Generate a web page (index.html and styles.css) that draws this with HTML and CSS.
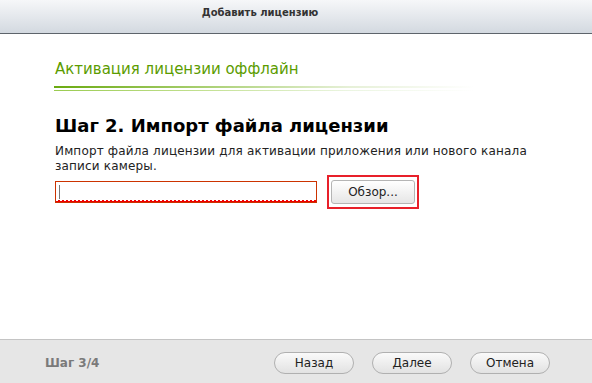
FILE: index.html
```html
<!DOCTYPE html>
<html lang="ru">
<head>
    <meta charset="UTF-8">
    <title>Добавить лицензию</title>
    <link rel="stylesheet" href="styles.css">
</head>
<body>
    <div class="dialog">
        <div class="dialog-header">Добавить лицензию</div>

        <div class="dialog-body">
            <div class="section-title">Активация лицензии оффлайн</div>
            <div class="section-rule"></div>

            <h2 class="step-title">Шаг 2. Импорт файла лицензии</h2>
            <p class="step-desc">Импорт файла лицензии для активации приложения или нового канала записи камеры.</p>

            <div class="file-row">
                <div class="file-input"><span class="caret"></span></div>
                <div class="browse-wrap">
                    <button class="button browse">Обзор...</button>
                </div>
            </div>
        </div>

        <div class="dialog-footer">
            <span class="step-count">Шаг 3/4</span>
            <div class="footer-buttons">
                <button class="button pill">Назад</button>
                <button class="button pill">Далее</button>
                <button class="button pill">Отмена</button>
            </div>
        </div>
    </div>
</body>
</html>
```

FILE: styles.css
```css
body {
    margin: 0;
    width: 592px;
    height: 383px;
    font-family: "DejaVu Sans", Verdana, sans-serif;
    background-color: #ffffff;
    overflow: hidden;
}

.dialog {
    display: flex;
    flex-direction: column;
    height: 100%;
}

.dialog-header {
    height: 33px;
    line-height: 26px;
    padding-right: 72px;
    text-align: center;
    font-size: 10px;
    font-weight: bold;
    color: #333;
    background: linear-gradient(#f6f7f9, #d3d9e0);
    border-bottom: 1px solid #5d646b;
}

.dialog-body {
    flex: 1;
    padding: 26px 0 0 55px;
}

.section-title {
    font-size: 15px;
    color: #5b9c00;
    line-height: 18px;
}

.section-rule {
    margin: 8px 0 0 -1px;
    width: 420px;
    height: 5px;
    background:
        linear-gradient(to right, #6aaa10, #a8cf70 35%, rgba(230, 240, 215, 1) 70%, rgba(255, 255, 255, 0)) top / 100% 2px no-repeat,
        linear-gradient(to right, #9acb50, #c2e090 35%, rgba(235, 245, 225, 1) 70%, rgba(255, 255, 255, 0)) bottom / 100% 1px no-repeat;
}

.step-title {
    margin: 24px 0 0;
    font-size: 18px;
    font-weight: bold;
    color: #000;
    line-height: 22px;
}

.step-desc {
    margin: 7px 0 0;
    width: 500px;
    font-size: 12px;
    letter-spacing: 0.17px;
    line-height: 15px;
    color: #222;
}

.file-row {
    display: flex;
    align-items: center;
    gap: 10px;
    margin-top: 1px;
}

.file-input {
    box-sizing: border-box;
    width: 262px;
    height: 22px;
    border: 1px solid #cc3300;
    padding: 3px 0 0 3px;
    background:
        linear-gradient(135deg, transparent 50%, #e00 50%) bottom left / 4px 2px repeat-x,
        linear-gradient(225deg, transparent 50%, #e00 50%) bottom left 2px / 4px 2px repeat-x,
        #fff;
}

.caret {
    display: block;
    width: 1px;
    height: 14px;
    background-color: #777;
}

.browse-wrap {
    border: 2px solid #e8202a;
    padding: 3px 2px;
}

.button {
    font-family: "DejaVu Sans", Verdana, sans-serif;
    font-size: 12px;
    color: #222;
    background: linear-gradient(#ffffff, #e6e6e6);
    border: 1px solid #b5b5b5;
    cursor: pointer;
}

.browse {
    display: block;
    width: 84px;
    height: 24px;
    border-radius: 3px;
}

.dialog-footer {
    height: 43px;
    display: flex;
    align-items: center;
    justify-content: space-between;
    padding: 0 42px 0 45px;
    background-color: #e6e6e6;
    border-top: 1px solid #c4c4c4;
}

.step-count {
    font-size: 12px;
    font-weight: bold;
    color: #7a7a7a;
    margin-top: 2px;
}

.footer-buttons {
    display: flex;
    gap: 18px;
    margin-top: 2px;
}

.pill {
    width: 80px;
    height: 22px;
    border-radius: 11px;
    border-color: #b0b0b0;
    background: linear-gradient(#fafafa, #e2e2e2);
}
```
